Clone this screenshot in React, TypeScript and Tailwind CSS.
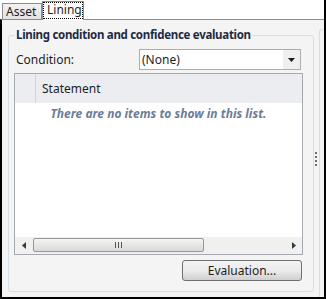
const ArrowDown = () => (
  <svg width="7" height="4" viewBox="0 0 7 4">
    <path d="M0 0h7L3.5 4z" fill="#1a1a1a" />
  </svg>
);

const ArrowLeft = () => (
  <svg width="4" height="7" viewBox="0 0 4 7">
    <path d="M4 0v7L0 3.5z" fill="#3a3a3a" />
  </svg>
);

const ArrowRight = () => (
  <svg width="4" height="7" viewBox="0 0 4 7">
    <path d="M0 0v7L4 3.5z" fill="#3a3a3a" />
  </svg>
);

const TabStrip = () => (
  <div className="h-[19px] flex items-start pl-[2px] relative z-10">
    <div className="mt-[3px] h-[16px] w-[40px] border border-b-0 border-[#898c95] bg-gradient-to-b from-[#f2f2f2] to-[#e2e2e2] pl-[3px] leading-[16px] text-[#1e1e1e]">
      Asset
    </div>
    <div className="mt-[1px] h-[19px] w-[42px] border border-b-0 border-[#898c95] bg-white">
      <div className="h-[17px] border border-dotted border-black pl-[3px] leading-[14px]">
        Lining
      </div>
    </div>
  </div>
);

const ConditionRow = () => (
  <div className="flex items-center h-[21px]">
    <div className="w-[125px] pl-[2px]">Condition:</div>
    <div className="w-[162px] h-[21px] border border-[#abadb3] bg-white flex">
      <div className="flex-1 pl-[2px] leading-[19px]">(None)</div>
      <div className="w-[17px] bg-[#efefef] flex items-center justify-center">
        <ArrowDown />
      </div>
    </div>
  </div>
);

const HScrollbar = () => (
  <div className="h-[17px] flex bg-[#f0f0f0]">
    <div className="w-[17px] flex items-center justify-center">
      <ArrowLeft />
    </div>
    <div className="ml-[1px] mt-[1px] h-[14px] w-[171px] rounded-[2px] border border-[#989898] bg-gradient-to-b from-[#f4f4f4] to-[#d9d9d9] flex items-center justify-center gap-[2px]">
      <span className="w-px h-[6px] bg-[#555]" />
      <span className="w-px h-[6px] bg-[#555]" />
      <span className="w-px h-[6px] bg-[#555]" />
    </div>
    <div className="flex-1" />
    <div className="w-[17px] flex items-center justify-center">
      <ArrowRight />
    </div>
  </div>
);

const StatementList = () => (
  <div className="mt-[3px] h-[182px] border border-[#a5a9b0] bg-white flex flex-col">
    <div className="h-[29px] flex bg-[#ebedf1]">
      <div className="w-[21px] border-r border-[#d0d3d8]" />
      <div className="pl-[6px] leading-[29px]">Statement</div>
    </div>
    <div className="pt-[3px] text-center font-bold italic text-[#6b7c97] leading-[16px]">
      There are no items to show in this list.
    </div>
    <div className="flex-1" />
    <HScrollbar />
  </div>
);

export default function App() {
  return (
    <div className="w-[326px] h-[299px] bg-white flex flex-col border-r-2 border-black font-['Segoe_UI','Noto_Sans',sans-serif] text-[12px] text-[#1e1e1e] overflow-hidden">
      <TabStrip />
      <div className="flex-1 min-h-0 flex border-l-2 border-b-2 border-black border-t border-t-[#898c95] bg-[#f4f4f4]">
        <fieldset className="ml-[6px] mt-[7px] w-[306px] self-start border border-[#d5dfe5] rounded-[3px] px-[5px] pr-[10px] pb-[10px]">
          <legend className="px-[2px] font-bold text-[11.5px] tracking-[-0.3px] leading-[16px] text-[#1c2b44]">
            Lining condition and confidence evaluation
          </legend>
          <div className="pt-[6px] flex flex-col">
            <ConditionRow />
            <StatementList />
            <button className="mt-[5px] mr-[1px] self-end w-[120px] h-[21px] rounded-[3px] border border-[#707070] bg-gradient-to-b from-[#f3f3f3] via-[#ebebeb] to-[#d0d0d0] text-[#1e1e1e]">
              Evaluation...
            </button>
          </div>
        </fieldset>
        <div className="w-[5px] flex flex-col justify-center pl-[1px] gap-[2px]">
          <span className="w-[2px] h-[2px] bg-[#6f6f6f]" />
          <span className="w-[2px] h-[2px] bg-[#6f6f6f]" />
          <span className="w-[2px] h-[2px] bg-[#6f6f6f]" />
          <span className="w-[2px] h-[2px] bg-[#6f6f6f]" />
        </div>
        <div className="flex-1 mt-[9px] border-l border-t border-[#d5dfe5] rounded-tl-[3px]" />
      </div>
    </div>
  );
}
